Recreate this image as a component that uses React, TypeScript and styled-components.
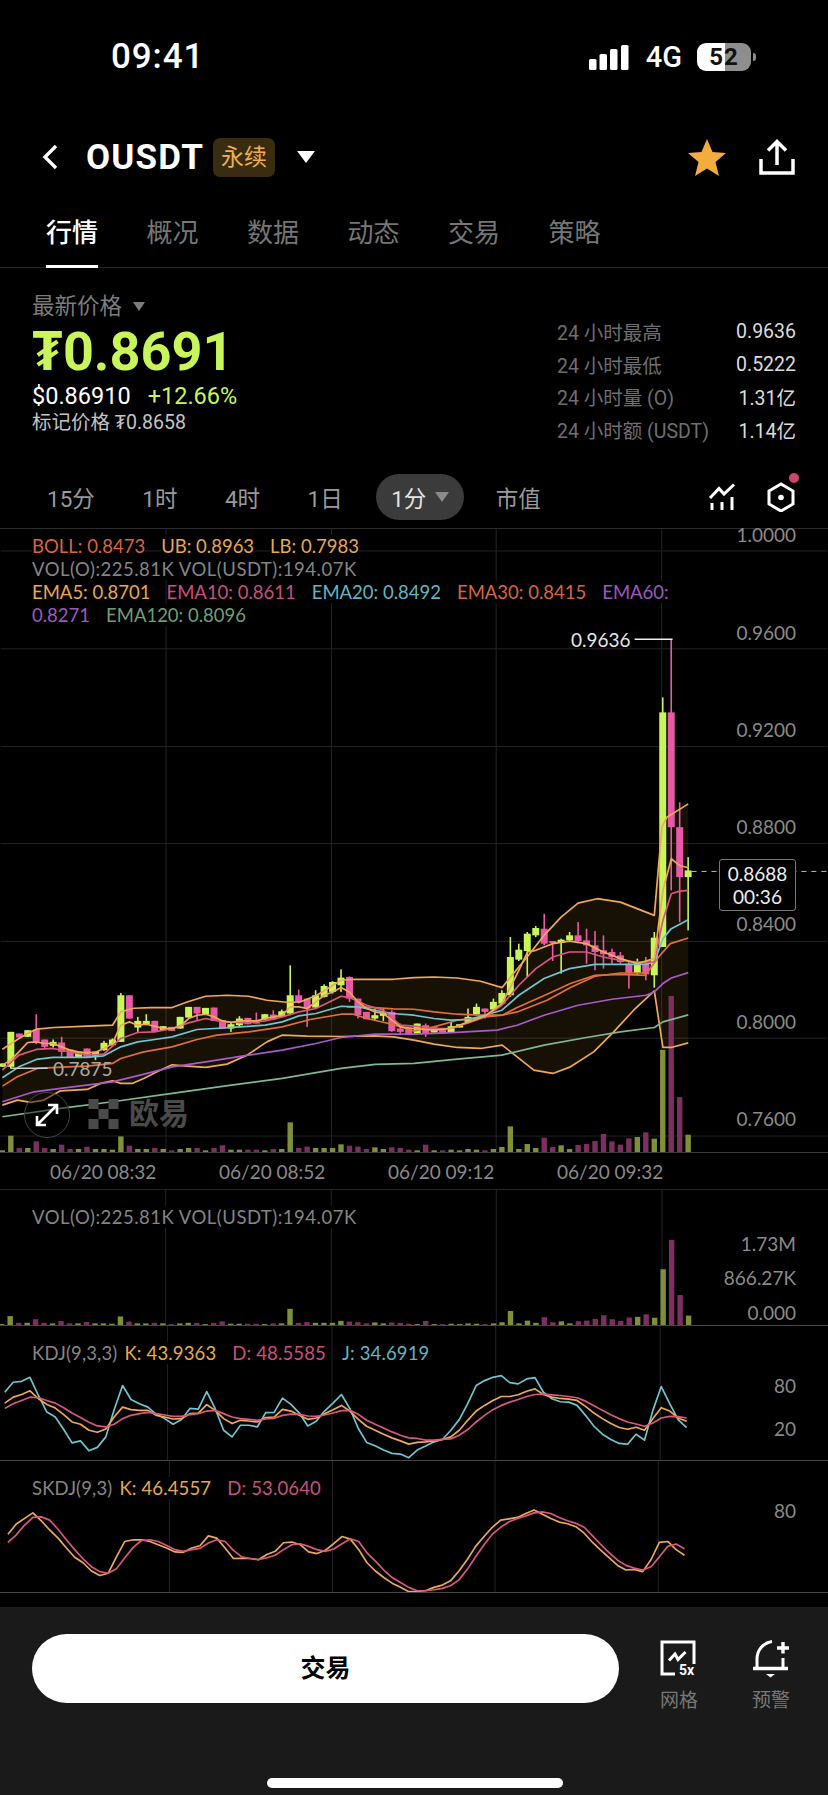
import React from 'react';
import styled, { createGlobalStyle } from 'styled-components';

const SANS = `Roboto, "Noto Sans CJK SC", "Noto Sans", sans-serif`;
const CHART_FONT = `Lato, Roboto, "Noto Sans CJK SC", sans-serif`;
const UP = '#c8f65a';
const DOWN = '#e85aa8';
const ORANGE = '#eeaa55';
const ROSE = '#d9587f';
const CYAN = '#6fc5d0';
const EMBER = '#e0703a';

// candle x positions are shared by every pane
const STEP = 8.48;
const cx = (i: number) => 1.7 + STEP * i;
const GRID_X = [165.6, 331.3, 496.3, 662];

type Pair = [number, number];

// chart data was read off at 3x, so everything gets divided back down
const mainY = (v: number) => 900 + v / 3;
const paneY = (v: number) => 1320 + v / 3;

const sparse = (left: Pair[], right: Pair[]) => [
  ...left.map(([h, v]) => `${(h / 3).toFixed(1)},${mainY(v).toFixed(1)}`),
  ...right.map(([h, v]) => `${(414 + h / 3).toFixed(1)},${mainY(v).toFixed(1)}`),
];

const even = (values: number[]) =>
  values.map((v, i) => `${cx(i).toFixed(1)},${paneY(v).toFixed(1)}`).join(' ');

// [up, body top, body bottom, wick top, wick bottom]
const CANDLES: [number, number, number, number?, number?][] = [
  [1, 490, 500], [1, 395, 500, 395, 505], [0, 400, 412], [1, 390, 410], [0, 388, 425, 342, 432],
  [0, 418, 440, 418, 445], [1, 425, 437, 418, 442], [0, 427, 455, 410, 470], [0, 448, 472], [1, 455, 472],
  [0, 445, 470], [1, 455, 467, 455, 480], [1, 428, 450, 422, 452], [1, 418, 435, 415, 440], [1, 285, 425, 278, 425],
  [0, 285, 355], [1, 362, 382, 350, 395], [1, 362, 372, 342, 375], [0, 362, 395], [1, 378, 390],
  [0, 380, 392], [1, 350, 385], [1, 320, 352], [0, 320, 340, 320, 360], [1, 323, 342],
  [0, 322, 362], [0, 360, 385], [1, 372, 385, 365, 395], [1, 355, 375, 348, 378], [0, 353, 372],
  [0, 360, 370, 337, 370], [1, 342, 358], [0, 343, 358, 330, 360], [1, 333, 350, 328, 350], [1, 285, 340, 195, 345],
  [0, 285, 305, 268, 310], [0, 295, 325, 295, 380], [1, 285, 322, 270, 322], [1, 257, 290, 252, 292], [1, 245, 275, 243, 280],
  [1, 232, 255, 207, 275], [0, 230, 295, 228, 305], [0, 295, 345, 295, 355], [0, 335, 357], [1, 345, 355, 325, 360],
  [1, 337, 347, 325, 362], [0, 335, 393, 330, 395], [0, 385, 395, 370, 402], [0, 385, 402],
  [1, 370, 400], [0, 375, 400, 370, 410], [1, 382, 397], [0, 385, 400], [1, 378, 397, 365, 397],
  [1, 372, 382], [1, 350, 365, 325, 370], [1, 320, 342, 310, 345], [0, 325, 335, 325, 355], [1, 305, 328, 295, 330],
  [1, 278, 310, 270, 310], [1, 170, 285, 110, 290], [1, 148, 178, 130, 182], [1, 100, 152, 95, 230], [1, 83, 105, 77, 110],
  [0, 85, 130, 40, 135], [0, 122, 128, 122, 182], [1, 118, 128, 115, 220], [1, 105, 120, 95, 125], [0, 105, 122, 65, 125],
  [0, 120, 135, 85, 190], [0, 135, 155, 92, 210], [0, 150, 162, 105, 205], [0, 155, 170, 145, 190], [0, 165, 185, 155, 190],
  [0, 190, 218, 185, 265], [1, 185, 218, 175, 225], [0, 190, 222, 170, 240], [1, 112, 225, 95, 262],
  [1, -565, 140, -610, 140], [0, -565, -220, -785, -30], [0, -220, -70, -295, 65], [1, -90, -70, -130, 90],
];

const VOL_BASE = 757;
const VOLUME_TOPS = [
  752, 708, 745, 745, 725, 745, 748, 735, 748, 748, 741, 748, 748, 750, 710, 738, 748, 748, 745, 748,
  752, 748, 745, 745, 752, 745, 737, 750, 750, 750, 750, 752, 748, 748, 668, 745, 741, 745, 745, 745,
  734, 738, 741, 748, 743, 748, 743, 745, 750, 752, 735, 752, 752, 750, 752, 748, 750, 752, 748, 742,
  680, 748, 733, 745, 714, 742, 737, 748, 736, 733, 724, 703, 725, 735, 716, 712, 698, 717, 450, 288,
  592, 705,
];

const BAND_UPPER = sparse(
  [[5, 447], [55, 415], [81, 400], [107, 387], [160, 382], [260, 378], [336, 375], [361, 335], [400, 324], [450, 322], [515, 322], [560, 305], [616, 288], [680, 285], [745, 288], [800, 300], [860, 306], [900, 305], [950, 285], [1023, 240], [1060, 237], [1180, 237]],
  [[0, 232], [60, 230], [130, 233], [200, 243], [265, 262], [290, 230], [340, 170], [391, 105], [442, 50], [493, 8], [550, -5], [620, 5], [722, 45], [745, -220], [760, -250], [824, -290]],
);
const BAND_LOWER = sparse(
  [[5, 615], [50, 600], [90, 607], [130, 600], [180, 572], [260, 568], [300, 550], [336, 542], [361, 550], [395, 550], [430, 535], [470, 515], [515, 494], [560, 498], [616, 502], [680, 492], [740, 465], [800, 425], [845, 405], [920, 408], [1023, 409], [1120, 407], [1180, 410]],
  [[0, 420], [60, 432], [130, 442], [200, 445], [265, 435], [310, 470], [360, 510], [417, 520], [470, 500], [540, 455], [600, 395], [660, 330], [722, 272], [748, 442], [773, 442], [824, 428]],
);

const MAIN_LINES: { color: string; points: string[] }[] = [
  {
    color: '#7fb890',
    points: sparse(
      [[5, 650], [180, 625], [336, 605], [515, 580], [693, 555], [846, 535], [1023, 505], [1125, 493]],
      [[0, 490], [130, 477], [264, 465], [391, 435], [518, 412], [620, 395], [722, 382], [748, 365], [824, 344]],
    ),
  },
  {
    color: '#a55cc8',
    points: sparse(
      [[5, 605], [100, 575], [180, 565], [336, 545], [440, 520], [515, 500], [616, 485], [745, 465], [846, 450], [947, 430], [1023, 412], [1125, 402]],
      [[0, 402], [100, 398], [250, 390], [310, 375], [391, 345], [493, 315], [595, 297], [697, 285], [722, 275], [748, 250], [773, 233], [824, 217]],
    ),
  },
  {
    color: EMBER,
    points: sparse(
      [[5, 558], [50, 530], [110, 505], [200, 500], [260, 498], [336, 490], [361, 475], [430, 455], [515, 440], [590, 418], [650, 405], [745, 395], [846, 380], [930, 358], [1023, 342], [1060, 342], [1100, 355], [1176, 372]],
      [[0, 392], [60, 380], [130, 360], [200, 352], [265, 345], [310, 335], [400, 300], [470, 262], [544, 228], [620, 218], [700, 218], [735, 170], [770, 130], [824, 113]],
    ),
  },
  {
    color: EMBER,
    points: sparse(
      [[1040, 320], [1090, 320], [1180, 326]],
      [[0, 327], [60, 335], [130, 342], [200, 345], [265, 345], [310, 322], [400, 282], [470, 250], [544, 225], [620, 222], [700, 225]],
    ),
  },
  {
    color: CYAN,
    points: sparse(
      [[5, 533], [55, 500], [107, 478], [157, 472], [208, 472], [259, 472], [310, 467], [361, 440], [412, 425], [463, 418], [515, 410], [590, 388], [642, 385], [718, 380], [795, 375], [846, 365], [896, 347], [947, 340], [1023, 318], [1074, 320], [1125, 330], [1176, 340]],
      [[0, 345], [60, 355], [110, 360], [163, 358], [213, 345], [264, 330], [315, 285], [391, 235], [467, 205], [544, 192], [620, 192], [697, 192], [722, 185], [748, 115], [773, 85], [824, 58]],
    ),
  },
  {
    color: ROSE,
    points: sparse(
      [[5, 510], [55, 465], [107, 448], [157, 445], [208, 455], [259, 465], [310, 462], [361, 415], [412, 397], [463, 395], [515, 385], [565, 368], [616, 355], [667, 365], [744, 368], [795, 362], [846, 350], [896, 335], [947, 325], [1023, 288], [1048, 292], [1100, 315], [1150, 330], [1201, 375]],
      [[0, 378], [60, 385], [110, 385], [163, 368], [213, 350], [264, 315], [315, 255], [366, 205], [417, 170], [467, 155], [518, 155], [569, 170], [620, 180], [671, 185], [722, 185], [748, 60], [773, -20], [798, -28], [824, -30]],
    ),
  },
  {
    color: ORANGE,
    points: sparse(
      [[5, 495], [30, 480], [55, 455], [81, 427], [107, 425], [132, 430], [157, 430], [183, 440], [208, 450], [234, 455], [259, 458], [285, 456], [310, 445], [336, 430], [361, 375], [387, 365], [412, 375], [438, 372], [463, 378], [489, 385], [515, 385], [540, 378], [565, 355], [590, 345], [616, 342], [642, 350], [667, 362], [693, 367], [718, 362], [744, 362], [770, 362], [795, 355], [820, 350], [846, 345], [870, 320], [896, 320], [921, 325], [947, 305], [972, 285], [998, 275], [1023, 262], [1048, 275], [1074, 305], [1100, 325], [1125, 335], [1150, 340], [1176, 360], [1201, 380]],
      [[0, 385], [60, 390], [110, 385], [163, 365], [213, 348], [264, 310], [290, 260], [315, 210], [341, 155], [366, 150], [391, 140], [417, 130], [467, 122], [518, 130], [569, 155], [620, 175], [671, 190], [722, 175], [748, -30], [773, -125], [798, -105], [824, -98]],
    ),
  },
];

const KDJ_J = [215, 185, 182, 170, 225, 275, 290, 328, 368, 362, 392, 382, 350, 268, 195, 237, 250, 260, 282, 295, 312, 298, 264, 266, 213, 265, 330, 350, 315, 315, 320, 277, 276, 233, 252, 278, 317, 303, 272, 248, 222, 265, 325, 367, 377, 390, 400, 402, 413, 390, 378, 365, 358, 330, 298, 250, 195, 180, 170, 165, 186, 190, 175, 171, 215, 235, 244, 245, 255, 285, 318, 342, 358, 370, 372, 342, 360, 270, 198, 250, 298, 322];
const KDJ_K = [248, 230, 222, 211, 235, 252, 263, 283, 305, 312, 330, 336, 326, 290, 260, 268, 270, 270, 285, 290, 296, 295, 280, 278, 253, 270, 295, 310, 300, 302, 305, 292, 290, 267, 272, 285, 297, 293, 280, 268, 255, 272, 297, 318, 330, 342, 353, 362, 372, 367, 365, 362, 358, 350, 330, 300, 272, 255, 240, 228, 228, 223, 212, 205, 222, 230, 234, 236, 240, 258, 278, 295, 310, 322, 327, 321, 330, 295, 262, 272, 293, 303];
const KDJ_D = [264, 250, 240, 230, 232, 240, 248, 262, 278, 292, 306, 317, 320, 312, 295, 285, 280, 276, 280, 284, 288, 288, 283, 280, 272, 270, 280, 290, 295, 297, 300, 296, 294, 285, 281, 282, 287, 288, 284, 278, 271, 270, 282, 300, 312, 323, 335, 345, 353, 355, 360, 360, 358, 356, 345, 328, 305, 285, 268, 255, 245, 237, 228, 222, 221, 223, 225, 228, 232, 242, 256, 270, 283, 295, 305, 311, 318, 308, 293, 288, 289, 293];
const SKDJ_K = [643, 612, 595, 578, 602, 630, 655, 685, 713, 730, 755, 769, 762, 712, 665, 660, 660, 665, 675, 685, 697, 698, 685, 678, 648, 655, 685, 717, 716, 717, 721, 705, 695, 669, 667, 675, 697, 702, 692, 672, 650, 658, 690, 730, 755, 775, 792, 805, 818, 817, 815, 805, 798, 785, 755, 720, 680, 650, 622, 600, 596, 592, 580, 569, 582, 595, 606, 611, 620, 640, 668, 692, 715, 738, 752, 750, 757, 720, 668, 665, 690, 707];
const SKDJ_D = [668, 645, 615, 592, 590, 600, 628, 660, 690, 718, 742, 757, 762, 748, 715, 683, 662, 660, 665, 677, 690, 695, 690, 686, 670, 660, 665, 692, 712, 717, 720, 715, 707, 690, 675, 672, 680, 690, 695, 688, 672, 657, 665, 700, 725, 752, 775, 790, 805, 815, 815, 812, 808, 800, 782, 750, 712, 675, 643, 622, 605, 595, 587, 578, 575, 580, 592, 602, 610, 622, 648, 675, 700, 722, 738, 746, 752, 742, 712, 680, 673, 687];

const PRICE_LABELS: [string, number][] = [
  ['1.0000', 7], ['0.9600', 105], ['0.9200', 202], ['0.8800', 299], ['0.8400', 396], ['0.8000', 494], ['0.7600', 591],
];
const DATES = ['06/20 08:32', '06/20 08:52', '06/20 09:12', '06/20 09:32'];
const STATS = [
  ['24 小时最高', '0.9636'],
  ['24 小时最低', '0.5222'],
  ['24 小时量 (O)', '1.31亿'],
  ['24 小时额 (USDT)', '1.14亿'],
];
const TABS = ['行情', '概况', '数据', '动态', '交易', '策略'];

const GridLines: React.FC<{ top: number; bottom: number; rows?: number[] }> = ({ top, bottom, rows = [] }) => (
  <g stroke="#232323" strokeWidth="1">
    {rows.map((y) => (
      <line key={y} x1="0" x2="828" y1={y} y2={y} />
    ))}
    {GRID_X.map((x) => (
      <line key={x} x1={x} x2={x} y1={top} y2={bottom} />
    ))}
  </g>
);

const Volumes: React.FC<{ base: number; scale: number }> = ({ base, scale }) => (
  <g>
    {VOLUME_TOPS.map((top, i) => {
      const h = ((VOL_BASE - top) / 3) * scale;
      return (
        <rect
          key={i}
          x={cx(i) - 2.7}
          y={base - h}
          width="5.4"
          height={h}
          fill={CANDLES[i][0] ? '#7f9039' : '#7d3060'}
        />
      );
    })}
  </g>
);

const Candles = () => (
  <g>
    {CANDLES.map(([up, t, b, wt, wb], i) => {
      const color = up ? UP : DOWN;
      const x = cx(i);
      return (
        <g key={i} fill={color}>
          <rect x={x - 0.8} y={mainY(wt ?? t)} width="1.6" height={mainY(wb ?? b) - mainY(wt ?? t)} />
          <rect x={x - 3.5} y={mainY(t)} width="7" height={mainY(b) - mainY(t)} />
        </g>
      );
    })}
  </g>
);

const Trace: React.FC<{ points: string; color: string }> = ({ points, color }) => (
  <polyline points={points} fill="none" stroke={color} strokeWidth="1.7" strokeLinejoin="round" />
);

const App: React.FC = () => (
  <Page>
    <GlobalStyle />

    <StatusBar>
      <Clock>09:41</Clock>
      <StatusIcons>
        <svg width="40" height="25" viewBox="0 0 40 25" fill="#fff">
          <rect x="0" y="14" width="7.5" height="11" rx="1.5" />
          <rect x="10.5" y="9" width="7.5" height="16" rx="1.5" />
          <rect x="21" y="4" width="7.5" height="21" rx="1.5" />
          <rect x="32" y="0" width="7.5" height="25" rx="1.5" />
        </svg>
        <Network>4G</Network>
        <Battery>52</Battery>
        <BatteryNub />
      </StatusIcons>
    </StatusBar>

    <Header>
      <svg width="18" height="26" viewBox="0 0 18 26" fill="none" stroke="#fff" strokeWidth="3.4">
        <path d="M15 2 L4 13 L15 24" />
      </svg>
      <Symbol>OUSDT</Symbol>
      <Badge>永续</Badge>
      <Caret />
      <HeaderActions>
        <svg width="38" height="37" viewBox="0 0 38 37" fill="#f3ac3f">
          <polygon points="19,0 24.5,13 38,14 27.5,23 31,37 19,29.5 7,37 10.5,23 0,14 13.5,13" />
        </svg>
        <svg width="36" height="36" viewBox="0 0 36 36" fill="none" stroke="#fff" strokeWidth="3.5">
          <path d="M2 20 V34 H34 V20" />
          <path d="M18 26 V3 M9 11.5 L18 2.5 L27 11.5" />
        </svg>
      </HeaderActions>
    </Header>

    <TabBar>
      {TABS.map((tab, i) => (
        <Tab key={tab} $active={i === 0}>
          {tab}
        </Tab>
      ))}
    </TabBar>

    <PriceSection>
      <div>
        <PriceCaption>
          最新价格
          <SmallCaret />
        </PriceCaption>
        <LastPrice>₮0.8691</LastPrice>
        <ChangeRow>
          <span>$0.86910</span>
          <Change>+12.66%</Change>
        </ChangeRow>
        <MarkPrice>标记价格 ₮0.8658</MarkPrice>
      </div>
      <StatsGrid>
        {STATS.map(([label, value]) => (
          <React.Fragment key={label}>
            <StatLabel>{label}</StatLabel>
            <StatValue>{value}</StatValue>
          </React.Fragment>
        ))}
      </StatsGrid>
    </PriceSection>

    <TimeBar>
      <TimeItem>15分</TimeItem>
      <TimeItem>1时</TimeItem>
      <TimeItem>4时</TimeItem>
      <TimeItem>1日</TimeItem>
      <TimePill>
        1分
        <PillCaret />
      </TimePill>
      <TimeItem>市值</TimeItem>
      <TimeIcons>
        <svg width="28" height="28" viewBox="0 0 28 28" fill="none" stroke="#fff" strokeWidth="3">
          <path d="M2 15 L11 5.5 L16 11 L26 1.5" />
          <path d="M4 20 V27 M14 19 V27 M24 14 V27" />
        </svg>
        <HexWrap>
          <svg width="30" height="30" viewBox="0 0 30 30" fill="none" stroke="#fff" strokeWidth="3">
            <path d="M15 2 L27 9 V22 L15 29 L3 22 V9 Z" />
            <circle cx="15" cy="15.5" r="2.8" fill="#fff" stroke="none" />
          </svg>
          <Dot />
        </HexWrap>
      </TimeIcons>
    </TimeBar>

    <MainPane>
      <PaneSvg viewBox="0 528 828 624">
        <GridLines top={528} bottom={1152} rows={[550, 648, 746, 843, 941, 1038, 1136]} />
        <polygon points={[...BAND_UPPER, ...[...BAND_LOWER].reverse()].join(' ')} fill="rgba(205,150,50,0.11)" />
        <Volumes base={1152} scale={1} />
        <Candles />
        <Trace points={BAND_UPPER.join(' ')} color={ORANGE} />
        <Trace points={BAND_LOWER.join(' ')} color={ORANGE} />
        {MAIN_LINES.map((l, i) => (
          <Trace key={i} points={l.points.join(' ')} color={l.color} />
        ))}
        <line x1="635" x2="673" y1="638.5" y2="638.5" stroke="#eee" strokeWidth="1.5" />
        <line x1="10" x2="47" y1="1068" y2="1068" stroke="#ccc" strokeWidth="1.5" />
        <line x1="692" x2="828" y1="871" y2="871" stroke="#bbb" strokeWidth="1" strokeDasharray="5 5" />
      </PaneSvg>

      <Legend>
        <LegendRow>
          <LegendItem $color="#d9653f">BOLL: 0.8473</LegendItem>
          <LegendItem $color="#e8a94f">UB: 0.8963</LegendItem>
          <LegendItem $color="#e8a94f">LB: 0.7983</LegendItem>
        </LegendRow>
        <LegendRow>
          <VolumeText $color="#858585">VOL(O):225.81K VOL(USDT):194.07K</VolumeText>
        </LegendRow>
        <LegendRow>
          <LegendItem $color="#e8a94f">EMA5: 0.8701</LegendItem>
          <LegendItem $color="#c9507e">EMA10: 0.8611</LegendItem>
          <LegendItem $color="#62b6c4">EMA20: 0.8492</LegendItem>
          <LegendItem $color="#d9653f">EMA30: 0.8415</LegendItem>
          <LegendItem $color="#9b59c0">EMA60: 0.8271</LegendItem>
          <LegendItem $color="#6f9f78">EMA120: 0.8096</LegendItem>
        </LegendRow>
      </Legend>

      {PRICE_LABELS.map(([label, y]) => (
        <AxisLabel key={label} $y={y - 2}>
          {label}
        </AxisLabel>
      ))}

      <HighLabel>0.9636</HighLabel>
      <LowLabel>0.7875</LowLabel>

      <PriceTag>
        <span>0.8688</span>
        <span>00:36</span>
      </PriceTag>

      <ExpandButton>
        <svg width="24" height="24" viewBox="0 0 24 24" fill="none" stroke="#fff" strokeWidth="2.6">
          <path d="M2 22 L22 2 M13 2 H22 V11 M2 13 V22 H11" />
        </svg>
      </ExpandButton>

      <Watermark>
        <svg width="31" height="30" viewBox="0 0 3 3" fill="#4a4a4a">
          <rect x="0" y="0" width="1" height="1" />
          <rect x="2" y="0" width="1" height="1" />
          <rect x="1" y="1" width="1" height="1" />
          <rect x="0" y="2" width="1" height="1" />
          <rect x="2" y="2" width="1" height="1" />
        </svg>
        欧易
      </Watermark>
    </MainPane>

    <DateAxis>
      {DATES.map((d) => (
        <DateLabel key={d}>{d}</DateLabel>
      ))}
    </DateAxis>

    <VolumePane>
      <PaneSvg viewBox="0 1190 828 135">
        <GridLines top={1190} bottom={1325} />
        <Volumes base={1325} scale={0.545} />
      </PaneSvg>
      <PaneLegend>
        <VolumeText $color="#858585">VOL(O):225.81K VOL(USDT):194.07K</VolumeText>
      </PaneLegend>
      <AxisLabel $y={53}>1.73M</AxisLabel>
      <AxisLabel $y={87}>866.27K</AxisLabel>
      <AxisLabel $y={122}>0.000</AxisLabel>
    </VolumePane>

    <IndicatorPane>
      <PaneSvg viewBox="0 1325 828 135">
        <GridLines top={1325} bottom={1460} />
        <Trace points={even(KDJ_J)} color={CYAN} />
        <Trace points={even(KDJ_K)} color={ORANGE} />
        <Trace points={even(KDJ_D)} color={ROSE} />
      </PaneSvg>
      <PaneLegend>
        <LegendItem $color="#858585">KDJ(9,3,3)</LegendItem>
        <LegendItem $color="#e8a94f">K: 43.9363</LegendItem>
        <LegendItem $color="#c9507e">D: 48.5585</LegendItem>
        <LegendItem $color="#62b6c4">J: 34.6919</LegendItem>
      </PaneLegend>
      <AxisLabel $y={59}>80</AxisLabel>
      <AxisLabel $y={102}>20</AxisLabel>
    </IndicatorPane>

    <IndicatorPane $short>
      <PaneSvg viewBox="0 1460 828 133">
        <GridLines top={1460} bottom={1593} />
        <Trace points={even(SKDJ_K)} color={ORANGE} />
        <Trace points={even(SKDJ_D)} color={ROSE} />
      </PaneSvg>
      <PaneLegend>
        <LegendItem $color="#858585">SKDJ(9,3)</LegendItem>
        <LegendItem $color="#e8a94f">K: 46.4557</LegendItem>
        <LegendItem $color="#c9507e">D: 53.0640</LegendItem>
      </PaneLegend>
      <AxisLabel $y={49}>80</AxisLabel>
    </IndicatorPane>

    <Footer>
      <FooterRow>
        <TradeButton>交易</TradeButton>
        <FooterAction>
          <IconSlot>
            <svg width="38" height="36" viewBox="0 0 38 36" fill="none" stroke="#fff" strokeWidth="3">
              <path d="M34 24 V2 H2 V34 H15" />
              <path d="M9 20.5 L15 14 L18 19.5 L25.5 12" />
              <FiveX x="19" y="34.5">
                5x
              </FiveX>
            </svg>
          </IconSlot>
          <FooterLabel>网格</FooterLabel>
        </FooterAction>
        <FooterAction>
          <IconSlot>
            <svg width="38" height="40" viewBox="0 0 38 40" fill="none" stroke="#fff" strokeWidth="3">
              <path d="M5 30 V21 C5 12 11 5 20 3.5" />
              <path d="M31 20 V30" />
              <path d="M1 30.5 H36" strokeWidth="3.6" />
              <path d="M25 10 H37 M31 4 V15.5" strokeWidth="3.4" />
              <path d="M14 36 H23 L18.5 39.5 Z" fill="#fff" stroke="none" />
            </svg>
          </IconSlot>
          <FooterLabel>预警</FooterLabel>
        </FooterAction>
      </FooterRow>
      <HomeIndicator />
    </Footer>
  </Page>
);

export default App;

const GlobalStyle = createGlobalStyle`
  html, body {
    margin: 0;
    padding: 0;
    background: #000;
  }
`;

const Page = styled.div`
  width: 828px;
  height: 1795px;
  overflow: hidden;
  background: #000;
  color: #fff;
  font-family: ${SANS};
  display: flex;
  flex-direction: column;
`;

const StatusBar = styled.div`
  height: 112px;
  flex: none;
  display: flex;
  justify-content: space-between;
  padding: 37px 73px 0 111px;
  box-sizing: border-box;
`;

const Clock = styled.div`
  font-size: 35px;
  line-height: 40px;
  font-weight: 500;
  letter-spacing: 0.9px;
`;

const StatusIcons = styled.div`
  display: flex;
  align-items: center;
  height: 40px;
  position: relative;
  margin-right: -1px;
`;

const Network = styled.div`
  font-size: 29px;
  font-weight: 500;
  margin-left: 17px;
  margin-right: 15px;
`;

const Battery = styled.div`
  width: 54px;
  height: 28px;
  border-radius: 9px;
  background: linear-gradient(90deg, #fff 0 52%, #8e8e8e 52% 100%);
  color: #111;
  font-size: 24px;
  line-height: 28px;
  font-weight: 700;
  text-align: center;
  letter-spacing: 1px;
`;

const BatteryNub = styled.div`
  width: 3px;
  height: 8px;
  margin-left: 2px;
  border-radius: 0 3px 3px 0;
  background: #8e8e8e;
`;

const Header = styled.div`
  height: 90px;
  flex: none;
  display: flex;
  align-items: center;
  padding: 0 33px 0 41px;
  box-sizing: border-box;
`;

const Symbol = styled.div`
  font-size: 35px;
  letter-spacing: 1.2px;
  font-weight: 700;
  margin-left: 27px;
`;

const Badge = styled.div`
  width: 62px;
  height: 39px;
  margin-left: 9px;
  border-radius: 7px;
  background: #3a2c10;
  color: #eeb04c;
  font-size: 23px;
  line-height: 39px;
  text-align: center;
`;

const Caret = styled.div`
  width: 0;
  height: 0;
  margin-left: 22px;
  border-left: 9px solid transparent;
  border-right: 9px solid transparent;
  border-top: 12px solid #fff;
`;

const HeaderActions = styled.div`
  margin-left: auto;
  display: flex;
  align-items: center;
  gap: 33px;
`;

const TabBar = styled.div`
  height: 66px;
  flex: none;
  display: flex;
  gap: 48.5px;
  padding-left: 46px;
  box-sizing: border-box;
  border-bottom: 1px solid #262626;
`;

const Tab = styled.div<{ $active?: boolean }>`
  height: 66px;
  box-sizing: border-box;
  padding-top: 13px;
  font-size: 26px;
  line-height: 36px;
  font-weight: ${(p) => (p.$active ? 500 : 400)};
  color: ${(p) => (p.$active ? '#fff' : '#767676')};
  border-bottom: 3px solid ${(p) => (p.$active ? '#fff' : 'transparent')};
`;

const PriceSection = styled.div`
  height: 198px;
  flex: none;
  display: flex;
  justify-content: space-between;
  padding: 25px 32px 0;
  box-sizing: border-box;
`;

const PriceCaption = styled.div`
  display: flex;
  align-items: center;
  font-size: 22.5px;
  line-height: 26px;
  color: #7c7c7c;
`;

const SmallCaret = styled.span`
  width: 0;
  height: 0;
  margin-left: 11px;
  border-left: 6.5px solid transparent;
  border-right: 6.5px solid transparent;
  border-top: 9px solid #7c7c7c;
`;

const LastPrice = styled.div`
  margin-top: 6px;
  font-size: 54px;
  line-height: 54px;
  font-weight: 700;
  color: ${UP};
`;

const ChangeRow = styled.div`
  margin-top: 4px;
  display: flex;
  gap: 17px;
  font-size: 23.5px;
  line-height: 26px;
`;

const Change = styled.span`
  color: ${UP};
`;

const MarkPrice = styled.div`
  margin-top: 3px;
  font-size: 19.5px;
  line-height: 22px;
  color: #c4c4c4;
`;

const StatsGrid = styled.div`
  width: 239px;
  margin-top: 22px;
  display: grid;
  grid-template-columns: 1fr auto;
  grid-auto-rows: 32.7px;
  align-items: center;
`;

const StatLabel = styled.div`
  font-size: 19.5px;
  color: #6f6f6f;
`;

const StatValue = styled.div`
  font-size: 19.5px;
  color: #dcdcdc;
  text-align: right;
`;

const TimeBar = styled.div`
  height: 62px;
  flex: none;
  display: flex;
  align-items: center;
  gap: 47.5px;
  padding: 0 32px 0 47px;
  box-sizing: border-box;
`;

const TimeItem = styled.div`
  font-size: 22.5px;
  color: #9a9a9a;
`;

const TimePill = styled.div`
  width: 88px;
  height: 46px;
  flex: none;
  margin: 0 -16px 0 -14px;
  border-radius: 23px;
  background: #3b3b3b;
  color: #e4e4e4;
  font-size: 22.5px;
  display: flex;
  align-items: center;
  justify-content: center;
  gap: 9px;
`;

const PillCaret = styled.span`
  width: 0;
  height: 0;
  border-left: 7px solid transparent;
  border-right: 7px solid transparent;
  border-top: 10px solid #8a8a8a;
`;

const TimeIcons = styled.div`
  margin-left: auto;
  display: flex;
  align-items: center;
  gap: 30px;
`;

const HexWrap = styled.div`
  position: relative;
  display: flex;
`;

const Dot = styled.span`
  position: absolute;
  top: -9px;
  right: -3px;
  width: 10px;
  height: 10px;
  border-radius: 50%;
  background: #c9486a;
`;

const MainPane = styled.div`
  position: relative;
  height: 624px;
  flex: none;
  border-top: 1px solid #2c2c2c;
  box-sizing: border-box;
  font-family: ${CHART_FONT};
`;

const PaneSvg = styled.svg`
  position: absolute;
  left: 0;
  top: 0;
  width: 828px;
  height: 100%;
  display: block;
`;

const Legend = styled.div`
  position: absolute;
  left: 32px;
  top: 6px;
  width: 665px;
`;

const LegendRow = styled.div`
  font-size: 18.5px;
  line-height: 22.9px;
`;

const LegendItem = styled.span<{ $color: string }>`
  color: ${(p) => p.$color};
  background: #000;
  margin-right: 16px;
`;

const VolumeText = styled(LegendItem)`
  letter-spacing: 0.5px;
  margin-right: 0;
`;

const AxisLabel = styled.div<{ $y: number }>`
  position: absolute;
  right: 32px;
  top: ${(p) => p.$y}px;
  transform: translateY(-50%);
  font-size: 19px;
  color: #8a8a8a;
`;

const HighLabel = styled.div`
  position: absolute;
  left: 571px;
  top: 100px;
  font-size: 19px;
  line-height: 22px;
  color: #e6e6e6;
`;

const LowLabel = styled.div`
  position: absolute;
  left: 53px;
  top: 529px;
  font-size: 19px;
  line-height: 22px;
  color: #a8a8a8;
`;

const PriceTag = styled.div`
  position: absolute;
  left: 719px;
  top: 330px;
  width: 77px;
  height: 52px;
  box-sizing: border-box;
  border: 1px solid #777;
  border-radius: 3px;
  background: #000;
  display: flex;
  flex-direction: column;
  align-items: center;
  justify-content: center;
  font-size: 19px;
  line-height: 23px;
  color: #eee;
`;

const ExpandButton = styled.div`
  position: absolute;
  left: 24px;
  top: 563px;
  width: 44px;
  height: 44px;
  border: 1px solid #444;
  border-radius: 50%;
  background: rgba(0, 0, 0, 0.45);
  display: flex;
  align-items: center;
  justify-content: center;
`;

const Watermark = styled.div`
  position: absolute;
  left: 88px;
  top: 570px;
  display: flex;
  align-items: center;
  gap: 10px;
  font-family: ${SANS};
  font-size: 30px;
  line-height: 30px;
  font-weight: 700;
  color: #4a4a4a;
`;

const DateAxis = styled.div`
  height: 38px;
  flex: none;
  display: flex;
  gap: 64px;
  padding-left: 50px;
  align-items: center;
  box-sizing: border-box;
  border-top: 1px solid #3a3a3a;
  border-bottom: 1px solid #262626;
  font-family: ${CHART_FONT};
`;

const DateLabel = styled.div`
  width: 105px;
  white-space: nowrap;
  font-size: 19px;
  color: #8a8a8a;
`;

const VolumePane = styled.div`
  position: relative;
  height: 135px;
  flex: none;
  font-family: ${CHART_FONT};
`;

const IndicatorPane = styled.div<{ $short?: boolean }>`
  position: relative;
  height: ${(p) => (p.$short ? 133 : 135)}px;
  flex: none;
  box-sizing: border-box;
  border-top: 1px solid #464646;
  font-family: ${CHART_FONT};
  ${(p) => p.$short && 'border-bottom: 1px solid #464646;'}
`;

const PaneLegend = styled.div`
  position: absolute;
  left: 32px;
  top: 15px;
  font-size: 18.5px;
  line-height: 24px;
  letter-spacing: 0.15px;
  white-space: nowrap;

  & > span:first-child {
    margin-right: 7px;
  }
`;

const Footer = styled.div`
  flex: none;
  height: 188px;
  margin-top: 14px;
  background: #1a1a1a;
  padding: 27px 31px 0 32px;
  box-sizing: border-box;
  display: flex;
  flex-direction: column;
  align-items: center;
`;

const FooterRow = styled.div`
  width: 100%;
  display: flex;
  align-items: flex-start;
  gap: 54px;
`;

const TradeButton = styled.div`
  width: 587px;
  height: 69px;
  flex: none;
  margin-right: -13px;
  border-radius: 35px;
  background: #fff;
  color: #000;
  font-size: 25px;
  line-height: 69px;
  font-weight: 700;
  text-align: center;
`;

const FooterAction = styled.div`
  width: 38px;
  flex: none;
  display: flex;
  flex-direction: column;
  align-items: center;
`;

const IconSlot = styled.div`
  height: 42px;
  margin-top: 3px;
  display: flex;
  align-items: center;
`;

const FooterLabel = styled.div`
  margin-top: 11px;
  font-size: 19px;
  line-height: 22px;
  white-space: nowrap;
  color: #777;
`;

const FiveX = styled.text`
  font-family: ${SANS};
  font-size: 14px;
  font-weight: 700;
  fill: #fff;
  stroke: none;
`;

const HomeIndicator = styled.div`
  width: 296px;
  height: 10px;
  margin-top: 66px;
  border-radius: 5px;
  background: #fff;
`;
